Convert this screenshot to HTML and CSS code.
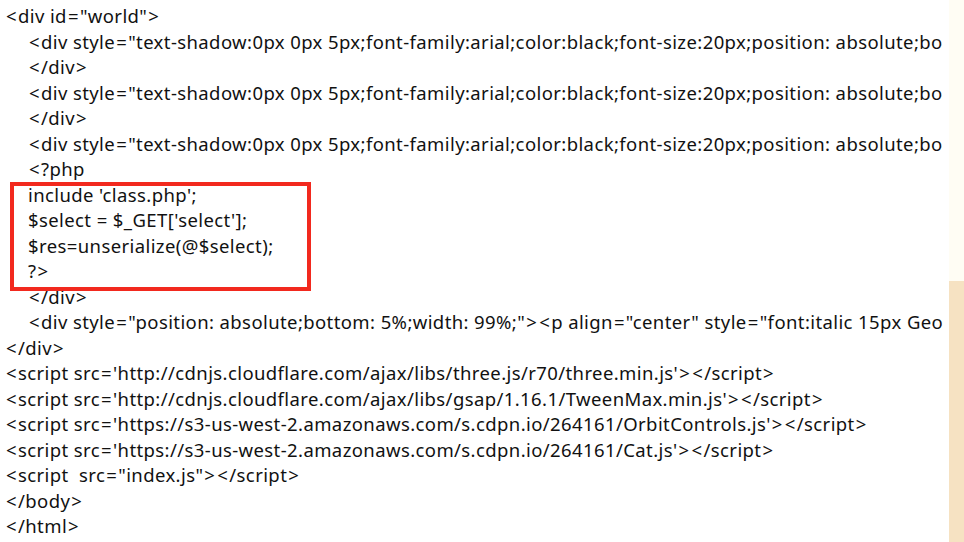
FILE: index.html
```html
<!DOCTYPE html>
<html>
<head>
<meta charset="utf-8">
<link rel="stylesheet" href="styles.css">
</head>
<body>
<div class="page">
  <div class="code">
    <div class="line"><span class="op">&lt;</span>div id<span class="op">=</span>"world"<span class="op">&gt;</span></div>
    <div class="line in"><span class="op">&lt;</span>div style<span class="op">=</span>"text-shadow:0px 0px 5px;font-family:arial;color:black;font-size:20px;position: absolute;bo</div>
    <div class="line in"><span class="op">&lt;</span>/div<span class="op">&gt;</span></div>
    <div class="line in"><span class="op">&lt;</span>div style<span class="op">=</span>"text-shadow:0px 0px 5px;font-family:arial;color:black;font-size:20px;position: absolute;bo</div>
    <div class="line in"><span class="op">&lt;</span>/div<span class="op">&gt;</span></div>
    <div class="line in"><span class="op">&lt;</span>div style<span class="op">=</span>"text-shadow:0px 0px 5px;font-family:arial;color:black;font-size:20px;position: absolute;bo</div>
    <div class="line in"><span class="op">&lt;</span>?php</div>
    <div class="line in">include 'class.php';</div>
    <div class="line in">$select = $_GET['select'];</div>
    <div class="line in">$res=unserialize(@$select);</div>
    <div class="line in">?<span class="op">&gt;</span></div>
    <div class="line in"><span class="op">&lt;</span>/div<span class="op">&gt;</span></div>
    <div class="line in"><span class="op">&lt;</span>div style<span class="op">=</span>"position: absolute;bottom: 5%;width: 99%;"<span class="op">&gt;</span><span class="op">&lt;</span>p align<span class="op">=</span>"center" style<span class="op">=</span>"font:italic 15px Geo</div>
    <div class="line"><span class="op">&lt;</span>/div<span class="op">&gt;</span></div>
    <div class="line"><span class="op">&lt;</span>script src<span class="op">=</span>'http://cdnjs.cloudflare.com/ajax/libs/three.js/r70/three.min.js'<span class="op">&gt;</span><span class="op">&lt;</span>/script<span class="op">&gt;</span></div>
    <div class="line"><span class="op">&lt;</span>script src<span class="op">=</span>'http://cdnjs.cloudflare.com/ajax/libs/gsap/1.16.1/TweenMax.min.js'<span class="op">&gt;</span><span class="op">&lt;</span>/script<span class="op">&gt;</span></div>
    <div class="line"><span class="op">&lt;</span>script src<span class="op">=</span>'https://s3-us-west-2.amazonaws.com/s.cdpn.io/264161/OrbitControls.js'<span class="op">&gt;</span><span class="op">&lt;</span>/script<span class="op">&gt;</span></div>
    <div class="line"><span class="op">&lt;</span>script src<span class="op">=</span>'https://s3-us-west-2.amazonaws.com/s.cdpn.io/264161/Cat.js'<span class="op">&gt;</span><span class="op">&lt;</span>/script<span class="op">&gt;</span></div>
    <div class="line"><span class="op">&lt;</span>script  src<span class="op">=</span>"index.js"<span class="op">&gt;</span><span class="op">&lt;</span>/script<span class="op">&gt;</span></div>
    <div class="line"><span class="op">&lt;</span>/body<span class="op">&gt;</span></div>
    <div class="line"><span class="op">&lt;</span>/html<span class="op">&gt;</span></div>
    <div class="mark"></div>
  </div>
  <div class="strip">
    <div class="strip-top"></div>
    <div class="strip-bottom"></div>
  </div>
</div>
</body>
</html>
```

FILE: styles.css
```css
html, body {
  margin: 0;
  padding: 0;
  background: #ffffff;
}
.page {
  display: flex;
  width: 964px;
  height: 542px;
  overflow: hidden;
}
.code {
  position: relative;
  width: 944px;
  margin-right: 5px;
  padding-top: 3px;
  overflow: hidden;
  font-family: "Noto Sans", sans-serif;
  font-size: 18.5px;
  letter-spacing: 0.4px;
  color: #111111;
}
.line {
  height: 25.5px;
  line-height: 25.5px;
  white-space: pre;
  padding-left: 5px;
}
.line.in {
  padding-left: 28px;
}
.op {
  margin: 0 1px;
}
.mark {
  position: absolute;
  left: 10px;
  top: 182px;
  width: 293px;
  height: 101px;
  border: 4px solid #f2291e;
}
.strip {
  display: flex;
  flex-direction: column;
  width: 15px;
}
.strip-top {
  height: 281px;
  background: #fffdf4;
}
.strip-bottom {
  flex: 1;
  background: #f6e2c2;
}
```
